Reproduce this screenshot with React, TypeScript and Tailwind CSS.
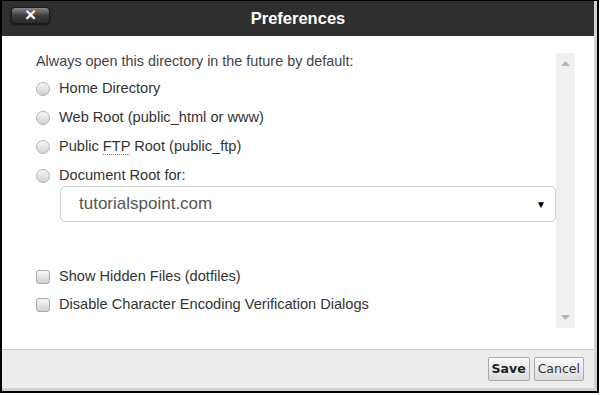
import React from 'react';

const radios = [
  { id: 'home', label: <>Home Directory</> },
  { id: 'web', label: <>Web Root (public_html or www)</> },
  {
    id: 'ftp',
    label: (
      <>
        Public <abbr className="no-underline border-b border-dotted border-[#777]" title="File Transfer Protocol">FTP</abbr> Root (public_ftp)
      </>
    ),
  },
  { id: 'docroot', label: <>Document Root for:</> },
];

const checks = ['Show Hidden Files (dotfiles)', 'Disable Character Encoding Verification Dialogs'];

function Radio() {
  return <span className="w-[14px] h-[14px] rounded-full border border-[#b3b3b3] bg-gradient-to-b from-[#f7f7f7] to-[#d2d2d2] shrink-0" />;
}

function Checkbox() {
  return <span className="w-[14px] h-[14px] rounded-[3px] border border-[#aaaaaa] bg-gradient-to-b from-[#f7f7f7] to-[#d0d0d0] shrink-0" />;
}

export default function App() {
  return (
    <div className="w-[600px] h-[395px] bg-white" style={{ fontFamily: '"Liberation Sans", Arial, sans-serif' }}>
      <div className="w-[599px] h-[393px] border-black border-t border-l-2 border-r-2 border-b-2 flex flex-col">
        <div className="flex-1 flex flex-col border-r-[3px] border-b-[3px] border-[#d2d2d2]">
          {/* Header */}
          <div className="h-[35px] bg-[#2f2f2f] flex items-center relative shrink-0">
            <button className="absolute left-[9px] top-[6px] w-[39px] h-[17px] rounded-[4px] bg-gradient-to-b from-[#8a8a8a] via-[#3e3e3e] to-[#2a2a2a] border border-[#1a1a1a] shadow-[0_1px_2px_rgba(0,0,0,0.6)] flex items-center justify-center">
              <span className="text-white font-bold text-[19px] leading-none -mt-[2px]">×</span>
            </button>
            <h1 className="w-full text-center text-white font-bold text-[16.5px]">Preferences</h1>
          </div>

          {/* Body */}
          <div className="flex-1 flex pl-[34px] pr-[19px] pt-[17px]">
            <div className="flex-1 flex flex-col -mt-[2px]">
              <p className="h-[20px] leading-[20px] text-[14.4px] text-[#444]">Always open this directory in the future by default:</p>
              <div className="flex flex-col gap-[9px] mt-[8px]">
                {radios.map((r) => (
                  <label key={r.id} className="h-[20px] flex items-center gap-[9px] text-[14.6px] text-[#333]">
                    <Radio />
                    <span>{r.label}</span>
                  </label>
                ))}
              </div>
              <div className="ml-[24px] mt-0 h-[36px] border border-[#cfcfcf] rounded-[5px] flex items-center justify-between pl-[18px] pr-[9px]">
                <span className="text-[17px] text-[#555]">tutorialspoint.com</span>
                <span className="text-[10px] text-black">▼</span>
              </div>
              <div className="flex flex-col gap-[8px] mt-[45px]">
                {checks.map((c) => (
                  <label key={c} className="h-[20px] flex items-center gap-[9px] text-[14.6px] text-[#333]">
                    <Checkbox />
                    <span>{c}</span>
                  </label>
                ))}
              </div>
            </div>
            <div className="w-[19px] h-[275px] bg-[#f0f0f0] flex flex-col items-center justify-between py-[8px] shrink-0">
              <svg width="9" height="5" viewBox="0 0 9 5"><path d="M0 5 L4.5 0 L9 5 Z" fill="#b5b5b5" /></svg>
              <svg width="9" height="5" viewBox="0 0 9 5"><path d="M0 0 L4.5 5 L9 0 Z" fill="#b5b5b5" /></svg>
            </div>
          </div>

          {/* Footer */}
          <div className="h-[39px] shrink-0 border-t border-[#c9c9c9] bg-[#ececec] flex items-center justify-end gap-[4px] pr-[10px]" style={{ fontFamily: '"DejaVu Sans", Verdana, sans-serif' }}>
            <button className="h-[24px] px-[3px] text-[12.5px] font-bold text-[#222] border border-[#a9a9a9] rounded-[2px] bg-gradient-to-b from-[#fafafa] to-[#dcdcdc]">Save</button>
            <button className="h-[24px] px-[3px] text-[12.5px] text-[#333] border border-[#a9a9a9] rounded-[2px] bg-gradient-to-b from-[#fafafa] to-[#dcdcdc]">Cancel</button>
          </div>
        </div>
      </div>
    </div>
  );
}
